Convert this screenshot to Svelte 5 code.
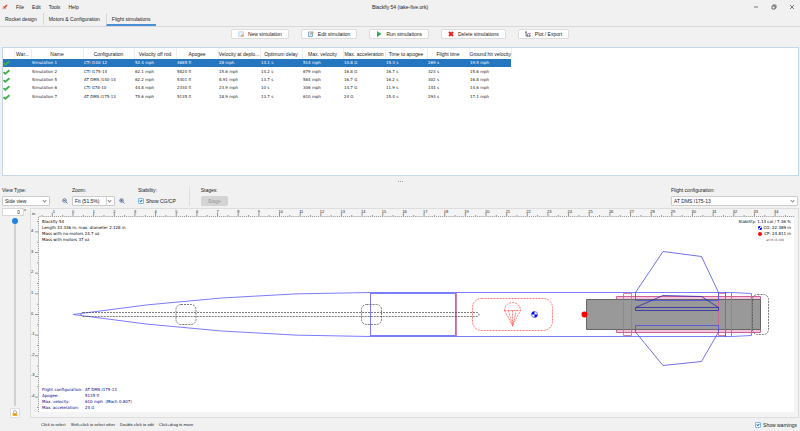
<script lang="ts">
	const menus = ['File', 'Edit', 'Tools', 'Help'];
	const tabs = ['Rocket design', 'Motors & Configuration', 'Flight simulations'];

	const actions = [
		{ icon: 'new', label: 'New simulation' },
		{ icon: 'edit', label: 'Edit simulation' },
		{ icon: 'run', label: 'Run simulations' },
		{ icon: 'delete', label: 'Delete simulations' },
		{ icon: 'plot', label: 'Plot / Export' }
	];

	const columns = [
		{ label: '', width: 11 },
		{ label: 'War...', width: 17 },
		{ label: 'Name', width: 52 },
		{ label: 'Configuration', width: 51 },
		{ label: 'Velocity off rod', width: 42 },
		{ label: 'Apogee', width: 42 },
		{ label: 'Velocity at deplo...', width: 42 },
		{ label: 'Optimum delay', width: 42 },
		{ label: 'Max. velocity', width: 41 },
		{ label: 'Max. acceleration', width: 42 },
		{ label: 'Time to apogee', width: 42 },
		{ label: 'Flight time', width: 42 },
		{ label: 'Ground hit velocity', width: 42 }
	];

	const simulations = [
		['Simulation 1', 'CTI I100-12', '52.4 mph', '4685 ft', '28 mph', '13.1 s', '514 mph', '10.8 G', '15.3 s', '269 s', '19.5 mph'],
		['Simulation 2', 'CTI I175-14', '62.1 mph', '5820 ft', '15.6 mph', '14.2 s', '679 mph', '16.8 G', '16.7 s', '323 s', '15.6 mph'],
		['Simulation 5', 'AT DMS I140-14', '62.2 mph', '5301 ft', '8.91 mph', '13.7 s', '584 mph', '16.7 G', '16.2 s', '302 s', '16.8 mph'],
		['Simulation 6', 'CTI G78-10', '44.8 mph', '2330 ft', '23.9 mph', '10 s', '306 mph', '14.7 G', '11.9 s', '144 s', '14.6 mph'],
		['Simulation 7', 'AT DMS I175-13', '75.6 mph', '5135 ft', '18.9 mph', '13.7 s', '610 mph', '24 G', '15.4 s', '293 s', '17.1 mph']
	];

	const hints = ['Click to select', 'Shift+click to select other', 'Double-click to edit', 'Click+drag to move'];

	let selected = $state(0);
	let activeTab = $state(2);
	let showCg = $state(true);
	let showWarnings = $state(true);
	let rotation = $state(0);

	// Drawing scale: pixels per inch and the position of the nose tip
	const scale = 20.65;
	const originX = 73;
	const originY = 314.5;

	// Ruler marks, ten to the inch
	function marks(from: number, to: number) {
		const list = [];
		for (let i = from; i <= to; i++) {
			list.push({ value: i / 10, size: i % 10 === 0 ? 4 : i % 5 === 0 ? 2 : 1 });
		}
		return list;
	}

	const marksX = marks(-16, 349);
	const marksY = marks(-47, 47);
</script>

<div class="window">
	<header class="titlebar">
		<nav class="menu">
			<svg class="logo" viewBox="0 0 12 12">
				<path d="M11 1 8 2 3 7l2 2 5-5z" fill="#d8402c" />
				<path d="M5 4 2 5 1 7l3-1zM8 7 7 10l-2 1 1-3z" fill="#e8604a" />
				<path d="M3 8 0 11l4-2z" fill="#d8402c" />
			</svg>
			{#each menus as menu}
				<button>{menu}</button>
			{/each}
		</nav>
		<div class="title">Blackfly 54 (take-five.ork)</div>
		<div class="controls">
			<button aria-label="Minimize">
				<svg viewBox="0 0 6 6"><path d="M1 3h4" /></svg>
			</button>
			<button aria-label="Restore">
				<svg viewBox="0 0 6 6"><path d="M1 2h3v3H1zM2 2V1h3v3H4" /></svg>
			</button>
			<button aria-label="Close">
				<svg viewBox="0 0 6 6"><path d="m1 1 4 4M5 1 1 5" /></svg>
			</button>
		</div>
	</header>

	<div class="tabs" role="tablist">
		{#each tabs as tab, i}
			<button role="tab" class:active={activeTab === i} aria-selected={activeTab === i} onclick={() => (activeTab = i)}>{tab}</button>
		{/each}
	</div>

	<div class="actions">
		{#each actions as action}
			<button class="action">
				<svg viewBox="0 0 12 12">
					{#if action.icon === 'new'}
						<path d="M1.5 1.5h9v9h-9z" fill="#eaf4fd" stroke="#8bb7dc" />
						<path d="M5 11h6V5z" fill="#e39a45" />
						<path d="m5 10 4-4" stroke="#a7cff0" stroke-width="1.5" />
					{:else if action.icon === 'edit'}
						<path d="M1 2h8v9H1z" fill="#eaf4fd" stroke="#5b93c8" stroke-width="1.5" />
						<path d="m4 8 1-3 5-4 1 2-5 4z" fill="#e6b04a" stroke="#6b7f94" stroke-width="0.5" />
					{:else if action.icon === 'run'}
						<path d="M2 0v12l9-6z" fill="#35a853" />
					{:else if action.icon === 'delete'}
						<path d="m2 2 8 8M10 2l-8 8" stroke="#e02424" stroke-width="4" />
					{:else}
						<path d="M2 0v10h10M1 3h2M5 9v2M9 9v2" fill="none" stroke="#445" stroke-width="1.5" />
						<path d="m4 8 3-4 2 3 2-3" fill="none" stroke="#b55bd0" stroke-width="2" />
					{/if}
				</svg>
				{action.label}
			</button>
		{/each}
	</div>

	<div class="table-panel">
		<table>
			<colgroup>
				{#each columns as column}
					<col style="width: {column.width}px" />
				{/each}
			</colgroup>
			<thead>
				<tr>
					{#each columns as column}
						<th>{column.label}</th>
					{/each}
				</tr>
			</thead>
			<tbody>
				{#each simulations as simulation, i}
					<tr class:selected={selected === i} onclick={() => (selected = i)}>
						<td class="status">
							<svg viewBox="0 0 12 10"><path d="m1 5 3 3 7-6" fill="none" stroke="#3fae49" stroke-width="3" /></svg>
						</td>
						<td></td>
						{#each simulation as value}
							<td>{value}</td>
						{/each}
					</tr>
				{/each}
			</tbody>
		</table>
	</div>

	<div class="splitter"><i></i><i></i><i></i></div>

	<div class="toolbar">
		<div class="field view">
			<label for="view">View Type:</label>
			<span class="select"><select id="view"><option>Side view</option></select></span>
		</div>
		<div class="field zoom">
			<label for="zoom">Zoom:</label>
			<div class="zoom-row">
				<button class="tool" aria-label="Zoom out">
					<svg viewBox="0 0 12 12"><circle cx="5" cy="5" r="3.5" /><path d="m8 8 3 3M3 5h4" /></svg>
				</button>
				<span class="select split"><select id="zoom"><option>Fit (51.5%)</option></select></span>
				<button class="tool" aria-label="Zoom in">
					<svg viewBox="0 0 12 12"><circle cx="5" cy="5" r="3.5" /><path d="m8 8 3 3M3 5h4M5 3v4" /></svg>
				</button>
			</div>
		</div>
		<div class="field stability">
			<span>Stability:</span>
			<label class="check"><input type="checkbox" bind:checked={showCg} />Show CG/CP</label>
		</div>
		<div class="field stages">
			<span>Stages:</span>
			<button class="stage" disabled>Stage</button>
		</div>
		<div class="field config">
			<label for="config">Flight configuration:</label>
			<span class="select"><select id="config"><option>AT DMS I175-13</option></select></span>
		</div>
	</div>

	<div class="workspace">
		<aside class="rotation">
			<div class="angle"><input type="text" aria-label="Rotation" value={rotation} /><span>°</span></div>
			<input class="slider" type="range" min="0" max="360" aria-label="Rotation angle" bind:value={rotation} />
			<button class="lock" aria-label="Reset rotation">
				<svg viewBox="0 0 12 12">
					<path d="M3 6V4a3 3 0 0 1 6 0v2" fill="none" stroke="#9a9a9a" stroke-width="1.5" />
					<path d="M1 6h10v6H1z" fill="#f0b23c" />
					<path d="M5 8h2v2H5z" fill="#a86c14" />
				</svg>
			</button>
		</aside>

		<div class="figure">
			<svg class="drawing" viewBox="31 209 767 208">
				<rect x="39" y="217" width="755" height="195" fill="#fff" />

				<g class="ruler">
					{#each marksX as mark}
						<path d="M{originX + mark.value * scale} 217v-{mark.size}" />
						{#if mark.size === 4}
							<text x={originX + mark.value * scale - 1} y="213">{mark.value}</text>
						{/if}
					{/each}
					{#each marksY as mark}
						<path d="M39 {originY - mark.value * scale}h-{mark.size}" />
						{#if mark.size === 4}
							<text x="31" y={originY - mark.value * scale}>{mark.value}</text>
						{/if}
					{/each}
					<text x="32" y="215">in</text>
				</g>

				<!-- motor -->
				<path d="M616.5 296.5h144v36h-144z" fill="#f3c6dc" stroke="#d0609a" />
				<path d="M586.5 299.5h174v30h-174z" fill="#999" stroke="#666" />

				<!-- nose cone, body tubes and tail -->
				<g class="body">
					<path d="M370.5 292.5Q221.5 292.5 73 314.5Q221.5 336.5 370.5 336.5" />
					<path d="M370.5 292.5H731.5L751.5 293.5V335.5L731.5 336.5H370.5z" />
					<path d="M370.5 293.5H456M370.5 335.5H456M455.5 292.5V336.5M731.5 292.5V336.5" />
					<path d="M725.5 292.5V336.5" class="dark" />
				</g>

				<!-- centering rings -->
				<g class="ring">
					<path d="M456.5 293V336M623.5 293.5h8v42h-8zM718.5 293.5h7v42h-7z" />
				</g>

				<!-- fins -->
				<g class="fin">
					<path d="M635.5 300.5V292.5L663 251.5L701.5 256.5L718.5 292.5V300.5z" />
					<path d="M635.5 332L663 365.5L701.5 361.5L718.5 332V325.5H635.5z" />
					<path d="M635.5 310.5V307.5L663 295.5L701.5 296.5L718.5 307.5V310.5zM635.5 307.5H718.5" class="dark" />
				</g>

				<!-- internal components -->
				<g class="mass">
					<rect x="81" y="312.5" width="398" height="4" rx="2" />
					<rect x="176" y="304.5" width="20" height="20" rx="5" />
					<rect x="361.5" y="304.5" width="20" height="20" rx="5" />
					<rect x="752.5" y="294.5" width="16" height="40" rx="5" />
				</g>
				<g class="chute">
					<rect x="472.5" y="298.5" width="80" height="32" rx="9" />
					<path d="M504.5 310.5a8 8 0 0 1 16 0zM504.5 310.5l8 15 8-15M508.5 310.5l4 15 4-15M512.5 310.5v16" />
				</g>

				{#if showCg}
					<circle cx="534.5" cy="314.5" r="3" fill="#fff" stroke="#00f" stroke-width="0.5" />
					<path d="M534.5 314.5v-3a3 3 0 0 0-3 3zM534.5 314.5v3a3 3 0 0 0 3-3z" fill="#00f" />
					<circle cx="584.5" cy="314.5" r="3" fill="#f00" />
				{/if}
			</svg>

			<div class="info">
				<div>Blackfly 54</div>
				<div>Length 33.336 in, max. diameter 2.128 in</div>
				<div>Mass with no motors 24.7 oz</div>
				<div>Mass with motors 37 oz</div>
			</div>

			<div class="stats">
				<div>Stability: 1.14 cal / 7.36 %</div>
				<div>
					<svg viewBox="0 0 8 8"><circle cx="4" cy="4" r="3.5" fill="#fff" stroke="#00f" /><path d="M4 4V0a4 4 0 0 0-4 4zM4 4v4a4 4 0 0 0 4-4z" fill="#00f" /></svg>
					CG: 22.389 in
				</div>
				<div>
					<svg viewBox="0 0 8 8"><circle cx="4" cy="4" r="4" fill="#f00" /></svg>
					CP: 24.811 in
				</div>
				<div class="mach">at M=0.300</div>
			</div>

			<dl class="flight">
				<dt>Flight configuration:</dt>
				<dd>AT DMS I175-13</dd>
				<dt>Apogee:</dt>
				<dd>5135 ft</dd>
				<dt>Max. velocity:</dt>
				<dd>610 mph&nbsp; (Mach 0.807)</dd>
				<dt>Max. acceleration:</dt>
				<dd>24 G</dd>
			</dl>
		</div>
	</div>

	<footer>
		{#each hints as hint}
			<span>{hint}</span>
		{/each}
		<label class="check"><input type="checkbox" bind:checked={showWarnings} />Show warnings</label>
	</footer>
</div>

<style>
	:global(body) {
		background: #f1f1f1;
	}

	.window {
		font: 5px/6px 'Liberation Sans', Arial, sans-serif;
		color: #222;
		background: #f1f1f1;
	}

	button,
	input,
	select {
		font: inherit;
		color: inherit;
		margin: 0;
		padding: 0;
		box-sizing: border-box;
	}

	button {
		border: none;
		background: none;
	}

	svg {
		display: block;
	}

	.titlebar {
		display: grid;
		grid-template-columns: 1fr auto 1fr;
		align-items: center;
		height: 13px;
	}

	.menu {
		display: flex;
		align-items: center;
		gap: 8px;
		padding-left: 2px;
	}

	.logo {
		width: 6px;
		height: 6px;
	}

	.controls {
		display: flex;
		justify-content: flex-end;
		gap: 12px;
		padding-right: 5px;
	}

	.controls svg {
		width: 6px;
		height: 6px;
		fill: none;
		stroke: #444;
		stroke-width: 0.7;
	}

	.tabs {
		display: flex;
		height: 13px;
		border-bottom: 1px solid #d8d8d8;
	}

	.tabs button {
		padding: 0 6px 0 5px;
		border-bottom: 2px solid transparent;
	}

	.tabs button + button {
		border-left: 1px solid #d8d8d8;
	}

	.tabs button.active {
		border-bottom-color: #4a8fd4;
	}

	.actions {
		display: flex;
		justify-content: center;
		gap: 12px;
		padding: 2px 0 8px;
	}

	.action {
		display: flex;
		align-items: center;
		gap: 4px;
		height: 10px;
		padding: 0 6px;
		background: #fff;
		border: 1px solid #dcdcdc;
		border-radius: 2px;
	}

	.action svg {
		width: 6px;
		height: 6px;
	}

	.table-panel {
		height: 127px;
		margin: 0 1px 0 2px;
		background: #fff;
		border: 1px solid #c5d8ea;
	}

	table {
		width: 508px;
		height: 53px;
		table-layout: fixed;
		border-collapse: collapse;
	}

	th {
		height: 11px;
		padding: 0;
		font-weight: normal;
		white-space: nowrap;
		border-right: 1px solid #eee;
	}

	td {
		padding: 0 0 0 1px;
		font: 4px/6px 'DejaVu Sans', sans-serif;
		white-space: nowrap;
	}

	.status {
		padding: 0;
	}

	.status svg {
		width: 7px;
		height: 6px;
	}

	tr.selected {
		color: #fff;
		background: #2675bf;
	}

	.splitter {
		display: flex;
		justify-content: center;
		align-items: center;
		gap: 1px;
		height: 11px;
	}

	.splitter i {
		width: 1px;
		height: 1px;
		background: #999;
	}

	.toolbar {
		display: flex;
		padding: 0 2px 2px;
	}

	.field {
		display: flex;
		flex-direction: column;
		gap: 3px;
	}

	.view {
		width: 48px;
		margin-right: 11px;
	}

	.zoom > label {
		padding-left: 11px;
	}

	.zoom-row {
		display: flex;
		gap: 3px;
	}

	.zoom-row .select {
		width: 43px;
	}

	.stability {
		margin-left: 12px;
		padding-right: 13px;
		border-right: 1px solid #ddd;
	}

	.stages {
		margin-left: 11px;
	}

	.config {
		width: 127px;
		margin-left: auto;
	}

	.select {
		position: relative;
		display: block;
	}

	.select::after {
		content: '';
		position: absolute;
		top: 3px;
		right: 4px;
		width: 2px;
		height: 2px;
		border: solid #888;
		border-width: 0 1px 1px 0;
		transform: rotate(45deg);
	}

	.split::before {
		content: '';
		position: absolute;
		top: 1px;
		right: 8px;
		height: 8px;
		border-left: 1px solid #d0d0d0;
	}

	select {
		appearance: none;
		display: block;
		width: 100%;
		height: 10px;
		padding-left: 2px;
		background: #fff;
		border: 1px solid #ccc;
		border-radius: 1px;
	}

	.tool {
		width: 8px;
		height: 10px;
		padding: 1px;
	}

	.tool svg {
		width: 6px;
		height: 6px;
		fill: none;
		stroke: #345a8c;
		stroke-width: 1.5;
	}

	.check {
		display: flex;
		align-items: center;
		gap: 2px;
		height: 10px;
	}

	.check input {
		appearance: none;
		position: relative;
		width: 6px;
		height: 6px;
		background: #fff;
		border: 1px solid #7db8ea;
		border-radius: 1px;
	}

	.check input:checked::after {
		content: '';
		position: absolute;
		top: 0;
		left: 1px;
		width: 1px;
		height: 2px;
		border: solid #2675bf;
		border-width: 0 1px 1px 0;
		transform: rotate(45deg);
	}

	.stage {
		width: 27px;
		height: 10px;
		color: #999;
		background: #d4d4d4;
		border-radius: 2px;
	}

	.workspace {
		display: flex;
		gap: 4px;
		padding-right: 1px;
	}

	.rotation {
		display: flex;
		flex-direction: column;
		align-items: center;
		gap: 2px;
		width: 26px;
	}

	.angle {
		display: flex;
		align-self: flex-end;
		width: 24px;
		height: 8px;
	}

	.angle input {
		width: 22px;
		padding-right: 3px;
		text-align: right;
		background: #fff;
		border: 1px solid #d8d8d8;
	}

	.slider {
		appearance: none;
		writing-mode: vertical-lr;
		flex: 1;
		width: 6px;
		min-height: 0;
		margin-left: 4px;
		background: linear-gradient(90deg, transparent 2px, #d0d0d0 2px, #d0d0d0 4px, transparent 4px);
	}

	.slider::-webkit-slider-thumb {
		appearance: none;
		width: 6px;
		height: 6px;
		background: #1f82e0;
		border-radius: 50%;
	}

	.lock {
		width: 10px;
		height: 10px;
		margin-left: 4px;
		padding: 1px;
		background: #fff;
		border: 1px solid #ddd;
		border-radius: 1px;
	}

	.lock svg {
		width: 6px;
		height: 6px;
	}

	.figure {
		position: relative;
		flex: 1;
		border: 1px solid #ddd;
		background: #f4f4f4;
	}

	.drawing {
		width: 100%;
		height: auto;
		fill: none;
	}

	.ruler path {
		stroke: #555;
		stroke-width: 0.6;
	}

	.ruler text {
		font-size: 4px;
		fill: #222;
	}

	.body path {
		stroke: #7c7cff;
	}

	.ring path {
		stroke: #d0609a;
		stroke-width: 0.8;
	}

	.fin path {
		stroke: #4c4ce0;
		stroke-width: 0.8;
	}

	.body .dark,
	.fin .dark {
		stroke: #2828a8;
	}

	.mass rect {
		stroke: #444;
		stroke-width: 0.7;
		stroke-dasharray: 2 1;
	}

	.chute {
		stroke: #ff4545;
		stroke-width: 0.7;
		stroke-dasharray: 2 1;
	}

	.info,
	.stats,
	.flight {
		position: absolute;
		font: 4px/6px 'DejaVu Sans', sans-serif;
		color: #000;
	}

	.info {
		top: 10px;
		left: 11px;
	}

	.stats {
		top: 10px;
		right: 7px;
		text-align: right;
	}

	.stats div {
		display: flex;
		justify-content: flex-end;
		align-items: center;
		gap: 2px;
	}

	.stats svg {
		width: 4px;
		height: 4px;
	}

	.stats .mach {
		padding-right: 7px;
		font-size: 3px;
		color: #555;
	}

	.flight {
		bottom: 6px;
		left: 11px;
		display: grid;
		grid-template-columns: 43px auto;
		margin: 0;
		color: #00008b;
	}

	dd {
		margin: 0;
	}

	footer {
		display: flex;
		align-items: center;
		gap: 5px;
		height: 13px;
		padding: 0 3px 0 41px;
		font-size: 4px;
	}

	footer .check {
		margin-left: auto;
		font-size: 5px;
	}
</style>
